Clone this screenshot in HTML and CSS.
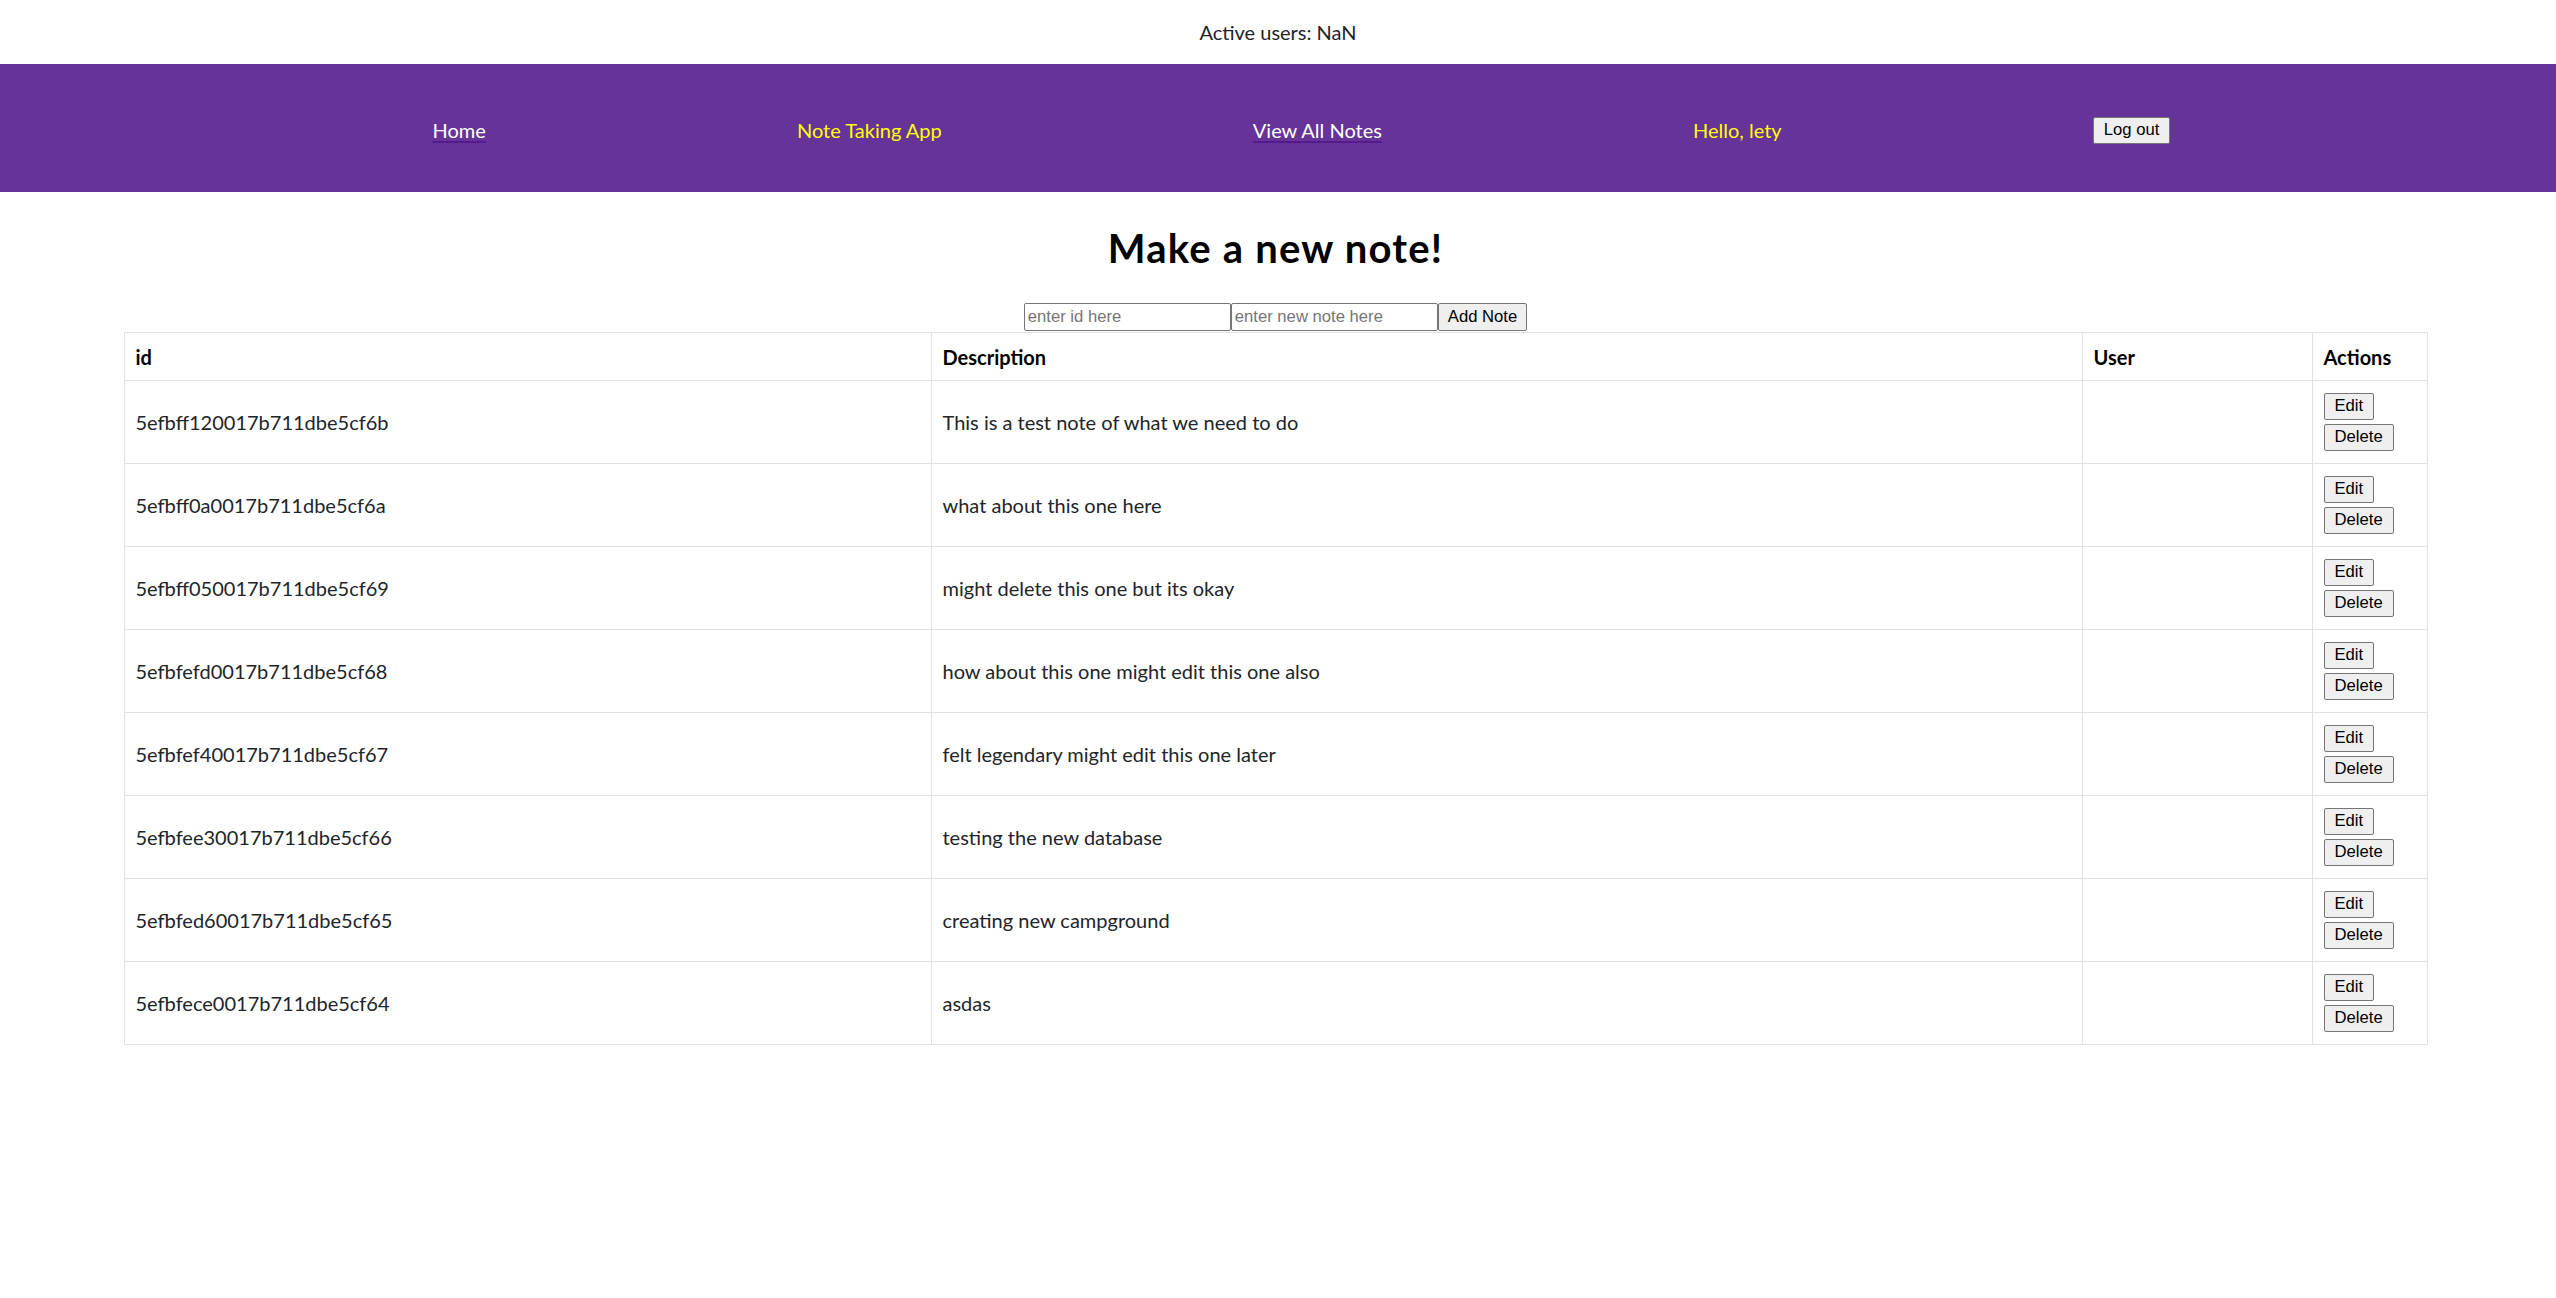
FILE: index.html
```html
<!DOCTYPE html>
<html lang="en">
<head>
<meta charset="utf-8">
<title>Note Taking App</title>
<link rel="stylesheet" href="styles.css">
</head>
<body>
<div class="active-users">Active users: NaN</div>
<nav class="navbar">
  <a class="nav-link" href="#">Home</a>
  <span class="nav-brand">Note Taking App</span>
  <a class="nav-link" href="#">View All Notes</a>
  <span class="nav-brand">Hello, lety</span>
  <button class="btn">Log out</button>
</nav>
<main>
  <h1 class="title">Make a new note!</h1>
  <form class="note-form"><input class="field" type="text" placeholder="enter id here"><input class="field" type="text" placeholder="enter new note here"><button class="btn" type="button">Add Note</button></form>
  <table class="notes">
    <thead>
      <tr><th class="col-id">id</th><th class="col-desc">Description</th><th class="col-user">User</th><th class="col-actions">Actions</th></tr>
    </thead>
    <tbody>
      <tr><td>5efbff120017b711dbe5cf6b</td><td>This is a test note of what we need to do</td><td></td><td><div class="actions"><button class="btn">Edit</button><button class="btn">Delete</button></div></td></tr>
      <tr><td>5efbff0a0017b711dbe5cf6a</td><td>what about this one here</td><td></td><td><div class="actions"><button class="btn">Edit</button><button class="btn">Delete</button></div></td></tr>
      <tr><td>5efbff050017b711dbe5cf69</td><td>might delete this one but its okay</td><td></td><td><div class="actions"><button class="btn">Edit</button><button class="btn">Delete</button></div></td></tr>
      <tr><td>5efbfefd0017b711dbe5cf68</td><td>how about this one might edit this one also</td><td></td><td><div class="actions"><button class="btn">Edit</button><button class="btn">Delete</button></div></td></tr>
      <tr><td>5efbfef40017b711dbe5cf67</td><td>felt legendary might edit this one later</td><td></td><td><div class="actions"><button class="btn">Edit</button><button class="btn">Delete</button></div></td></tr>
      <tr><td>5efbfee30017b711dbe5cf66</td><td>testing the new database</td><td></td><td><div class="actions"><button class="btn">Edit</button><button class="btn">Delete</button></div></td></tr>
      <tr><td>5efbfed60017b711dbe5cf65</td><td>creating new campground</td><td></td><td><div class="actions"><button class="btn">Edit</button><button class="btn">Delete</button></div></td></tr>
      <tr><td>5efbfece0017b711dbe5cf64</td><td>asdas</td><td></td><td><div class="actions"><button class="btn">Edit</button><button class="btn">Delete</button></div></td></tr>
    </tbody>
  </table>
</main>
</body>
</html>
```

FILE: styles.css
```css
html, body {
  margin: 0;
  padding: 0;
  background: #ffffff;
}

body {
  font-family: Lato, "Noto Sans", sans-serif;
  font-size: 20px;
  color: #212529;
}

.active-users {
  height: 64px;
  display: flex;
  align-items: center;
  justify-content: center;
  color: #212529;
}

.navbar {
  height: 128px;
  background: #663399;
  display: flex;
  align-items: center;
  justify-content: space-around;
  padding: 4px 230px 0 277px;
  box-sizing: border-box;
}

.nav-link {
  color: #ffffff;
  text-decoration: underline;
  text-decoration-color: #551a8b;
  text-underline-offset: 3px;
}

.nav-brand {
  color: #ffff00;
}

.btn {
  font-family: "Liberation Sans", Arial, sans-serif;
  font-size: 16.67px;
  color: #000000;
  background: #efefef;
  border: 1px solid #767676;
  border-radius: 2px;
  height: 27px;
  padding: 0 10px;
  line-height: 1;
  cursor: pointer;
}

main {
  padding-right: 5px;
}

.title {
  text-align: center;
  font-size: 40px;
  font-weight: 700;
  letter-spacing: 1.2px;
  color: #000000;
  margin: 28px 0 26px;
  line-height: 57px;
}

.note-form {
  display: flex;
  justify-content: center;
  align-items: stretch;
  height: 28px;
}

.field {
  width: 207px;
  height: 28px;
  box-sizing: border-box;
  margin: 0;
  padding: 1px 3px;
  border: 1px solid #767676;
  border-radius: 2px;
  font-family: "Liberation Sans", Arial, sans-serif;
  font-size: 16.67px;
  color: #000000;
}

.field::placeholder {
  color: #757575;
}

.note-form .btn {
  height: 28px;
  padding: 0 9px;
}

.notes {
  width: 2303px;
  margin: 1px auto 0;
  border-collapse: collapse;
  table-layout: fixed;
  border: 1px solid #dee2e6;
}

.col-id { width: 784px; }
.col-desc { width: 1128px; }
.col-user { width: 207px; }
.col-actions { width: 92px; }

.notes th,
.notes td {
  border: 1px solid #dee2e6;
  padding: 0 11px;
  text-align: left;
  vertical-align: middle;
  line-height: 26px;
}

.notes th {
  height: 47px;
  font-weight: 700;
  color: #000000;
}

.notes td {
  height: 82px;
  color: #212529;
}

.actions {
  display: flex;
  flex-direction: column;
  align-items: flex-start;
  gap: 4px;
}
```
